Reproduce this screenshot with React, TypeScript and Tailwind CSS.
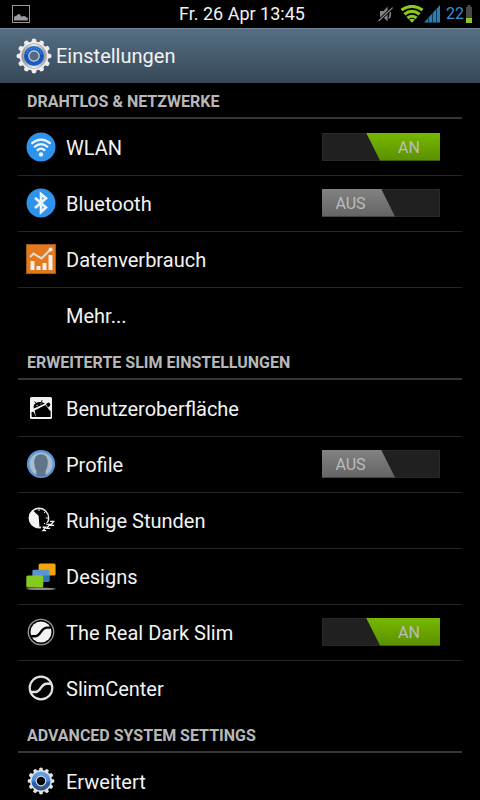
import React, { useState } from 'react';

interface SettingItem {
  id: string;
  title: string;
  icon?: React.ReactNode;
  hasSwitch?: boolean;
}

interface SettingSection {
  title: string;
  items: SettingItem[];
}

const TEETH = [0, 30, 60, 90, 120, 150, 180, 210, 240, 270, 300, 330];

const HeaderGear: React.FC = () => (
  <svg viewBox="0 0 36 36" className="w-9 h-9" aria-hidden="true">
    <defs>
      <linearGradient id="gearBody" x1="0" y1="0" x2="1" y2="0">
        <stop offset="0" stopColor="#8f8f8f" />
        <stop offset="0.5" stopColor="#f0f0f0" />
        <stop offset="1" stopColor="#979797" />
      </linearGradient>
      <linearGradient id="gearBlue" x1="0" y1="0" x2="0" y2="1">
        <stop offset="0" stopColor="#2470d0" />
        <stop offset="0.5" stopColor="#1450b8" />
        <stop offset="1" stopColor="#1c5fd0" />
      </linearGradient>
    </defs>
    {TEETH.map((angle) => (
      <path key={angle} d="M15 6L16 1.2Q18 -0.2 20 1.2L21 6Z" fill="#ececec" transform={`rotate(${angle} 18 18)`} />
    ))}
    <circle cx="18" cy="18" r="14.4" fill="#efefef" />
    <circle cx="18" cy="18" r="12.6" fill="url(#gearBody)" stroke="#b5b5b5" strokeWidth="0.8" />
    <circle cx="18" cy="18" r="10" fill="url(#gearBlue)" />
    <path d="M10.6 16A7.6 7.6 0 0 1 25.4 16" fill="none" stroke="#4d9aea" strokeWidth="1.2" strokeDasharray="1 1.4" />
    <circle cx="18" cy="18" r="5.2" fill="#536b80" stroke="#d4d8dc" strokeWidth="1.2" />
  </svg>
);

const SmallGear: React.FC = () => (
  <svg viewBox="0 0 28 28" className="w-7 h-7" aria-hidden="true">
    <defs>
      <linearGradient id="ringBlue" x1="0" y1="0" x2="0" y2="1">
        <stop offset="0" stopColor="#69a3e4" />
        <stop offset="0.45" stopColor="#5590d8" />
        <stop offset="0.6" stopColor="#1d5cb4" />
        <stop offset="0.8" stopColor="#2a5c9c" />
        <stop offset="1" stopColor="#405468" />
      </linearGradient>
    </defs>
    {TEETH.map((angle) => (
      <path key={angle} d="M11.8 5L12.4 1Q14 0.2 15.6 1L16.2 5Z" fill="#e6e6e6" transform={`rotate(${angle} 14 14)`} />
    ))}
    <circle cx="14" cy="14" r="11" fill="#e2e2e2" />
    <circle cx="14" cy="14" r="9.6" fill="url(#ringBlue)" />
    <circle cx="14" cy="14" r="4.8" fill="#000" stroke="#d8dce2" strokeWidth="1.2" />
  </svg>
);

const WlanIcon: React.FC = () => (
  <svg viewBox="0 0 30 30" className="w-[30px] h-[30px]" aria-hidden="true">
    <circle cx="15" cy="15" r="14.5" fill="#2e93ea" />
    <g fill="none" stroke="#eef3f8" strokeWidth="2.2">
      <path d="M5.4 11.6Q15 3.6 24.6 11.6" />
      <path d="M8 15.2Q15 9 22 15.2" />
      <path d="M10.8 18.6Q15 14.6 19.2 18.6" />
    </g>
    <circle cx="15" cy="22.4" r="2.2" fill="#eef3f8" />
  </svg>
);

const BluetoothIcon: React.FC = () => (
  <svg viewBox="0 0 30 30" className="w-[30px] h-[30px]" aria-hidden="true">
    <circle cx="15" cy="15" r="14.5" fill="#2e93ea" />
    <path d="M9 9.8L20 19.6L15 24V6L20 10.2L9 20" fill="none" stroke="#eef3f8" strokeWidth="2.6" />
  </svg>
);

const DataUsageIcon: React.FC = () => (
  <svg viewBox="0 0 30 30" className="w-[30px] h-[30px]" aria-hidden="true">
    <rect x="0.5" y="0.5" width="29" height="29" fill="#e4781c" stroke="#9c5a18" />
    <path d="M4 13L7.5 9.6L15.5 14.4L24 6" fill="none" stroke="#e4ded8" strokeWidth="2" />
    <circle cx="24.6" cy="5.6" r="2" fill="#f2f2f2" />
    <path d="M4.5 17h4v9h-4zM10.5 22h4v4h-4zM16.5 19h4v7h-4zM22.5 11h4v15h-4z" fill="#f2eeea" />
  </svg>
);

const InterfaceIcon: React.FC = () => (
  <svg viewBox="0 0 24 24" className="w-6 h-6" aria-hidden="true">
    <rect x="1" y="1" width="22" height="22" rx="1.5" fill="#f2f2f2" />
    <path d="M4.8 12.6C4 8.8 6.2 6.8 9 6.2C12 5.4 14.6 6.2 15.6 7.8Z" fill="#000" />
    <path d="M7 7.4L5.6 5.4M12.2 6.2L13.2 4.2" stroke="#000" strokeWidth="0.9" />
    <path d="M5.6 14.4L16.4 9L21.6 15.6V21H7Z" fill="#000" />
    <path d="M2.4 16.4Q4 15 5 16.8L7 21H2.8ZM16.8 8L19.6 6.4Q22 7.4 21 9.8L19 11.6Z" fill="#000" />
    <circle cx="8" cy="9.4" r="0.6" fill="#f2f2f2" />
    <circle cx="12" cy="7.8" r="0.6" fill="#f2f2f2" />
  </svg>
);

const ProfileIcon: React.FC = () => (
  <svg viewBox="0 0 30 30" className="w-[30px] h-[30px]" aria-hidden="true">
    <circle cx="15" cy="15" r="12.8" fill="#a9bccd" stroke="#5f96d6" strokeWidth="2.6" />
    <path d="M10.4 26.8V21.8Q8.2 18.6 8.2 13.4C8.2 8 11 5.2 15 5.2S21.8 8 21.8 13.4Q21.8 18.6 19.6 21.8V26.8Q15 28.4 10.4 26.8Z" fill="#5f7488" />
  </svg>
);

const QuietHoursIcon: React.FC = () => (
  <svg viewBox="0 0 30 30" className="w-[30px] h-[30px]" aria-hidden="true">
    <circle cx="13" cy="13" r="9.7" fill="#000" stroke="#e8e8e8" strokeWidth="1.4" />
    <path d="M6.6 5.2L12.6 10.8L13.6 22.8A9.9 9.9 0 0 1 6.6 5.2Z" fill="#f4f4f4" />
    <path d="M13 4v2M22 13h-2.4M19.4 6.6L18 8M19.4 19.4L18 18" stroke="#f4f4f4" strokeWidth="1" />
    <path d="M15 21.4L28 14V26H15Z" fill="#000" />
    <path d="M16.6 22.2h3l-2.6 3.4h3.2M20.4 19.4h3.2l-2.8 4h3.4M24 16.4h3.6l-3 4h3.6" fill="none" stroke="#f0f0f0" strokeWidth="1.4" />
  </svg>
);

const ThemesIcon: React.FC = () => (
  <svg viewBox="0 0 30 30" className="w-[30px] h-[30px]" aria-hidden="true">
    <ellipse cx="15" cy="27.8" rx="15" ry="1.2" fill="#8a8a8a" />
    <rect x="12.6" y="2.6" width="17" height="12" rx="1.5" fill="#f2a40c" />
    <rect x="6.4" y="8.8" width="17" height="12" rx="1.5" fill="#5c94d0" />
    <rect x="16.6" y="14.6" width="6.8" height="6.2" rx="1" fill="#2878b4" />
    <rect x="0.3" y="14.4" width="17" height="12" rx="1.5" fill="#86c920" />
  </svg>
);

const DarkSlimIcon: React.FC = () => (
  <svg viewBox="0 0 28 28" className="w-7 h-7" aria-hidden="true">
    <circle cx="14" cy="14" r="12.7" fill="#000" stroke="#989898" strokeWidth="1.3" />
    <circle cx="14" cy="14" r="10.5" fill="#f2f2f2" />
    <path d="M3.4 18.2H8.6C13.8 18.2 13.6 10 19.6 9.6H24.6" fill="none" stroke="#000" strokeWidth="2.4" />
  </svg>
);

const SlimCenterIcon: React.FC = () => (
  <svg viewBox="0 0 28 28" className="w-7 h-7" aria-hidden="true">
    <circle cx="14" cy="14" r="11.3" fill="none" stroke="#e2e2e2" strokeWidth="2.2" />
    <path d="M4 18H8.6C13.8 18 13.6 10 19.4 9.8H24" fill="none" stroke="#e2e2e2" strokeWidth="2.4" />
  </svg>
);

const sections: SettingSection[] = [
  {
    title: 'DRAHTLOS & NETZWERKE',
    items: [
      { id: 'wlan', title: 'WLAN', icon: <WlanIcon />, hasSwitch: true },
      { id: 'bluetooth', title: 'Bluetooth', icon: <BluetoothIcon />, hasSwitch: true },
      { id: 'data', title: 'Datenverbrauch', icon: <DataUsageIcon /> },
      { id: 'more', title: 'Mehr...' },
    ],
  },
  {
    title: 'ERWEITERTE SLIM EINSTELLUNGEN',
    items: [
      { id: 'interface', title: 'Benutzeroberfläche', icon: <InterfaceIcon /> },
      { id: 'profile', title: 'Profile', icon: <ProfileIcon />, hasSwitch: true },
      { id: 'quiet', title: 'Ruhige Stunden', icon: <QuietHoursIcon /> },
      { id: 'themes', title: 'Designs', icon: <ThemesIcon /> },
      { id: 'darkslim', title: 'The Real Dark Slim', icon: <DarkSlimIcon />, hasSwitch: true },
      { id: 'slimcenter', title: 'SlimCenter', icon: <SlimCenterIcon /> },
    ],
  },
  {
    title: 'ADVANCED SYSTEM SETTINGS',
    items: [{ id: 'advanced', title: 'Erweitert', icon: <SmallGear /> }],
  },
];

const StatusBar: React.FC = () => (
  <div className="h-7 grid grid-cols-[1fr_auto_1fr] items-center pl-3 pr-2">
    <svg viewBox="0 0 18 18" className="w-[18px] h-[18px]" aria-hidden="true">
      <rect x="0.5" y="0.5" width="17" height="17" fill="none" stroke="#9a9a9a" />
      <path d="M2 15.6V12L4 10.4H5L6 9H7.4L9.6 11.8L12 10.8L15.8 13V15.6Z" fill="#9a9a9a" />
    </svg>
    <time className="text-[18px] leading-7 text-[#f2f2f2]">Fr. 26 Apr 13:45</time>
    <div className="flex items-center justify-end">
      <svg viewBox="0 0 16 18" className="w-4 h-[18px] mr-1.5" aria-hidden="true">
        <path d="M2 6h3.6L9.6 1.4V16.4L5.6 12.4H2Z" fill="#848484" />
        <path d="M11 4.6Q13.6 9 11 13.4" fill="none" stroke="#7c7c7c" strokeWidth="1.8" />
        <path d="M0.6 16L14.6 2.6" stroke="#000" strokeWidth="3" />
        <path d="M0.6 16L14.6 2.6" stroke="#8c8c8c" strokeWidth="1.3" />
      </svg>
      <svg viewBox="0 0 24 18" className="w-6 h-[18px]" aria-hidden="true">
        <g fill="none" stroke="#8ccb1e" strokeWidth="3">
          <path d="M1.4 5Q12 -2.2 22.6 5" />
          <path d="M4.4 9.2Q12 3.6 19.6 9.2" />
          <path d="M7.4 13Q12 9.4 16.6 13" />
        </g>
        <path d="M9 14.6Q12 12.8 15 14.6L12 17.8Z" fill="#8ccb1e" />
      </svg>
      <svg viewBox="0 0 16 18" className="w-4 h-[18px] mr-1.5" aria-hidden="true">
        <path d="M0 17.6L16 0V17.6Z" fill="#2c7cb4" />
        <path d="M4.5 12v6M8.5 8v10M12.5 4v14" stroke="#0c3a58" strokeWidth="1" />
      </svg>
      <span className="text-base leading-7 text-[#3b8fd6] mr-0.5">22</span>
      <svg viewBox="0 0 6 18" className="w-1.5 h-[18px]" aria-hidden="true">
        <path d="M1.4 0H4.6V2H6V18H0V2H1.4Z" fill="#484848" />
        <rect y="13" width="6" height="5" fill="#8cc81e" />
      </svg>
    </div>
  </div>
);

interface SwitchProps {
  id: string;
  checked: boolean;
  onChange: () => void;
}

const HoloSwitch: React.FC<SwitchProps> = ({ id, checked, onChange }) => (
  <span className="relative flex w-[118px] h-7 bg-[#202020] border border-[#282828]">
    <input
      id={id}
      type="checkbox"
      role="switch"
      checked={checked}
      onChange={onChange}
      className="absolute inset-0 z-10 w-full h-full opacity-0 cursor-pointer"
    />
    <span
      className={
        checked
          ? 'absolute -inset-y-px -right-px w-[74px] flex items-center justify-center pl-3 bg-linear-to-b from-[#76b800] to-[#5a9000] [clip-path:polygon(0_0,100%_0,100%_100%,14px_100%)]'
          : 'absolute -inset-y-px -left-px w-[73px] flex items-center justify-center pr-4 bg-linear-to-b from-[#828282] to-[#646464] [clip-path:polygon(0_0,59px_0,100%_100%,0_100%)]'
      }
    >
      <span className="pt-0.5 text-base text-[#bcbcbc]">{checked ? 'AN' : 'AUS'}</span>
    </span>
  </span>
);

const App: React.FC = () => {
  const [switches, setSwitches] = useState<Record<string, boolean>>({
    wlan: true,
    bluetooth: false,
    profile: false,
    darkslim: true,
  });

  const toggleSwitch = (id: string) => {
    setSwitches((prev) => ({ ...prev, [id]: !prev[id] }));
  };

  return (
    <div className="h-screen flex flex-col overflow-hidden bg-black font-[Roboto,'Noto_Sans',sans-serif] text-[#f3f3f3]">
      <StatusBar />

      <header className="h-[55px] shrink-0 flex items-center gap-1 px-4 bg-linear-to-b from-[#566e84] to-[#364858] border-t border-[#6f8798]">
        <HeaderGear />
        <h1 className="text-xl">Einstellungen</h1>
      </header>

      <main className="flex-1 overflow-hidden px-[18px]">
        {sections.map((section) => (
          <section key={section.title}>
            <div className="pb-px">
              <h2 className="h-9 flex items-center pt-1 pl-[9px] border-b-2 border-[#363636] text-base font-bold text-[#b8b8b8]">
                {section.title}
              </h2>
            </div>
            <ul>
              {section.items.map((item) => (
                <li key={item.id} className="h-14 flex items-center border-b border-[#262626] last:border-transparent">
                  <span className="w-[46px] shrink-0 flex justify-center pb-0.5">{item.icon}</span>
                  {item.hasSwitch ? (
                    <label htmlFor={item.id} className="flex-1 pl-0.5 text-xl">
                      {item.title}
                    </label>
                  ) : (
                    <button type="button" className="flex-1 pl-0.5 text-left text-xl">
                      {item.title}
                    </button>
                  )}
                  {item.hasSwitch && (
                    <div className="pr-[22px] pb-0.5">
                      <HoloSwitch id={item.id} checked={switches[item.id]} onChange={() => toggleSwitch(item.id)} />
                    </div>
                  )}
                </li>
              ))}
            </ul>
          </section>
        ))}
      </main>
    </div>
  );
};

export default App;
